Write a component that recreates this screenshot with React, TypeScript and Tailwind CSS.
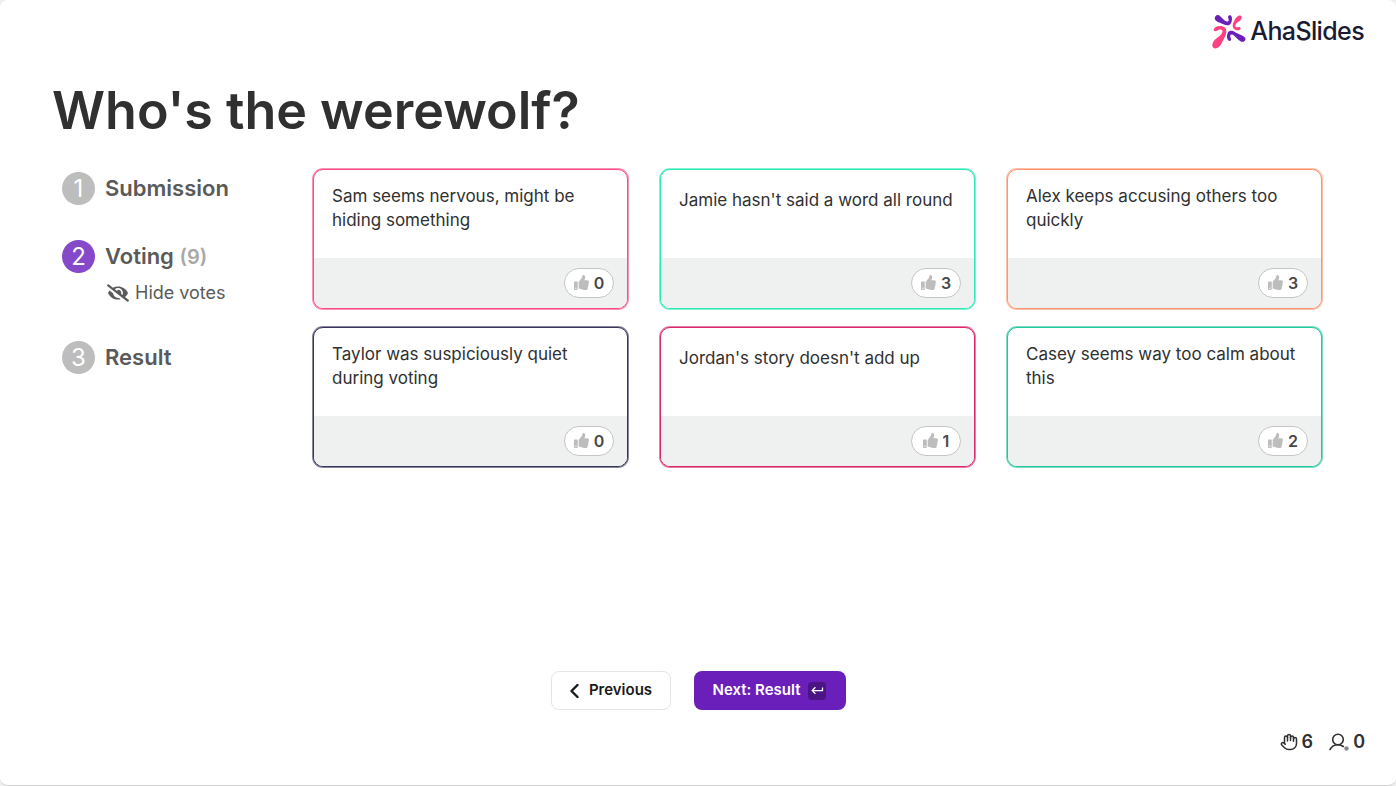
import { useState } from 'react';
import { Hand } from 'lucide-react';
import { FaEyeSlash, FaThumbsUp } from 'react-icons/fa';
import { MdKeyboardReturn } from 'react-icons/md';

type Idea = {
  text: string;
  votes: number;
  border: string;
};

const ideas: Idea[] = [
  {
    text: 'Sam seems nervous, might be hiding something',
    votes: 0,
    border: 'border-[#fc4a87] ring-[#fc4a87]/60',
  },
  {
    text: "Jamie hasn't said a word all round",
    votes: 3,
    border: 'border-[#2be8b3] ring-[#2be8b3]/60',
  },
  {
    text: 'Alex keeps accusing others too quickly',
    votes: 3,
    border: 'border-[#fd9570] ring-[#fd9570]/60',
  },
  {
    text: 'Taylor was suspiciously quiet during voting',
    votes: 0,
    border: 'border-[#38355a] ring-[#38355a]/60',
  },
  {
    text: "Jordan's story doesn't add up",
    votes: 1,
    border: 'border-[#d8266b] ring-[#d8266b]/60',
  },
  {
    text: 'Casey seems way too calm about this',
    votes: 2,
    border: 'border-[#22c79b] ring-[#22c79b]/60',
  },
];

function Logo() {
  return (
    <a href="#" className="flex items-center gap-1">
      <svg viewBox="0 0 34 36" className="h-9 w-[34px]" aria-hidden="true">
        <path
          d="M3 4.200C4 1.600 6.500 1.500 8.500 3.400C10.500 5.400 12.500 7.900 14.500 8.500C16.800 9.100 17.300 7.300 16.300 5.300C15.300 3 17.200 1.600 18.800 2.500C20.700 3.600 20.500 10.400 17.200 12C14.200 13.200 11 11.100 7.500 9.600C4.500 8.300 2 7 3 4.200Z"
          fill="#6a1eba"
        />
        <path
          d="M29 3C30.800 4.700 29.300 6.900 26.800 8.600C24.500 10 23 11.800 23.400 13.300C23.800 14.900 25.500 14 27 14C29 14 29.200 16.500 27.500 17C24.500 17.900 20.800 16.500 20.700 12.800C20.700 8.800 25.800 .6 29 3Z"
          fill="#ff4081"
        />
        <path
          d="M2.400 15.200C5.500 11.700 14 12.500 14.300 17.500C14.600 22.500 11.800 25.500 9.800 30C8.100 33.500 5.800 35.700 2.800 35.500C0 35.300 -.5 31.500 1.800 28C4.500 24.700 9.800 22.300 10.400 19C10.900 16.600 8 15.800 5.500 17.500C2.900 19.200 .4 17.500 2.400 15.200Z"
          fill="#ff4081"
        />
        <path
          d="M15.800 19.800C17 17.300 20.300 17.200 23.200 19.200C26.200 21.200 31.400 22.100 33.100 24.800C34.500 27.600 31.500 29.600 28.800 28.400C25.300 26.600 22.500 22 20 21.500C18 21.200 17.800 23.500 18.800 25.200C19.900 27.400 17.500 28.700 16.200 27.300C14.500 25.500 14.800 22 15.800 19.800Z"
          fill="#6a1eba"
        />
      </svg>
      <span className="text-[25px] leading-8 font-medium tracking-tight text-[#1a1a33]">
        AhaSlides
      </span>
    </a>
  );
}

function StepNumber({ value, active }: { value: number; active?: boolean }) {
  return (
    <span
      className={`flex size-[33px] items-center justify-center rounded-full text-2xl font-normal text-white ${
        active ? 'bg-[#8549c9]' : 'bg-[#bdbdbd]'
      }`}
    >
      {value}
    </span>
  );
}

function IdeaCard({ idea }: { idea: Idea }) {
  return (
    <li
      className={`flex flex-col overflow-hidden rounded-[10px] border bg-white ring-1 ${idea.border}`}
    >
      <div className="min-h-22 flex-1 px-[18px] pt-[14px]">
        <p className="flex min-h-8 items-center text-[17px] leading-6 text-[#303030]">
          {idea.text}
        </p>
      </div>
      <div className="flex h-[50px] items-center justify-end bg-[#eff1f0] px-[13px]">
        <button
          type="button"
          className="flex h-[30px] w-[50px] items-center justify-center gap-[5px] rounded-full border border-[#c4c4c4] bg-white text-base font-semibold text-[#484848]"
        >
          <FaThumbsUp className="mb-[2px] size-[15px] text-[#bdbdbd]" />
          {idea.votes}
        </button>
      </div>
    </li>
  );
}

export default function App() {
  const [votesHidden, setVotesHidden] = useState(false);

  return (
    <div className="min-h-screen bg-[#efefef] font-['Inter',sans-serif]">
      <div className="flex min-h-screen flex-col rounded-lg border-b border-[#cfcfcf] bg-white">
        <header className="flex justify-end px-8 pt-[13px]">
          <Logo />
        </header>

        <main className="flex flex-1 flex-col px-[52px] pt-[30px]">
          <h1 className="text-[52px] leading-16 font-semibold text-[#303030]">
            Who's the werewolf?
          </h1>

          <div className="flex pt-[26px] pr-[22px] pl-[10px]">
            <ol className="w-[251px] shrink-0 text-[22px] font-semibold text-[#5a5a5a]">
              <li className="flex items-center gap-[10px] pt-[3px]">
                <StepNumber value={1} />
                Submission
              </li>
              <li className="pt-[35px]">
                <div className="flex items-center gap-[10px]">
                  <StepNumber value={2} active />
                  <span>
                    Voting <span className="text-xl text-[#a8a8a8]">(9)</span>
                  </span>
                </div>
                <button
                  type="button"
                  onClick={() => setVotesHidden((value) => !value)}
                  className="ml-[45px] flex h-10 items-center gap-[6px] text-lg font-normal"
                >
                  <FaEyeSlash className="size-[22px]" />
                  {votesHidden ? 'Show votes' : 'Hide votes'}
                </button>
              </li>
              <li className="flex items-center gap-[10px] pt-7">
                <StepNumber value={3} />
                Result
              </li>
            </ol>

            <ul className="grid flex-1 grid-cols-3 gap-x-8 gap-y-[18px]">
              {ideas.map((idea) => (
                <IdeaCard key={idea.text} idea={idea} />
              ))}
            </ul>
          </div>
        </main>

        <nav className="flex justify-center gap-[23px]">
          <button
            type="button"
            className="flex h-[39px] w-[120px] items-center justify-center gap-2 rounded-lg border border-[#e4e4e4] bg-white text-[15px] font-semibold text-[#1a1a1a]"
          >
            <svg viewBox="0 0 12 14" className="h-[14px] w-3" aria-hidden="true">
              <path
                d="M8.500 1L2.500 7L8.500 13"
                fill="none"
                stroke="currentColor"
                strokeWidth="2.400"
                strokeLinecap="round"
                strokeLinejoin="round"
              />
            </svg>
            Previous
          </button>
          <button
            type="button"
            className="flex h-[39px] w-[152px] items-center justify-center gap-2 rounded-lg bg-[#6a1eba] text-[15px] font-semibold text-white"
          >
            Next: Result
            <span className="flex size-[18px] items-center justify-center rounded bg-[#4b1583]">
              <MdKeyboardReturn className="size-[15px]" />
            </span>
          </button>
        </nav>

        <footer className="flex items-center justify-end gap-4 px-[31px] pt-5 pb-[31px] text-lg leading-6 font-semibold text-[#303030]">
          <span className="flex items-center gap-1">
            <Hand className="size-[18px]" strokeWidth={2} />6
          </span>
          <span className="flex items-center gap-1">
            <svg viewBox="0 0 20 18" className="h-[18px] w-5" fill="none">
              <circle cx="9" cy="6.500" r="5.300" stroke="currentColor" strokeWidth="1.600" />
              <path
                d="M1 16.500C2.600 13.500 5.500 11.800 9 11.800C11 11.800 12.800 12.400 14.300 13.500"
                stroke="currentColor"
                strokeWidth="1.600"
                strokeLinecap="round"
              />
              <circle cx="17.500" cy="15.500" r="2.200" fill="#8a8a8a" />
            </svg>
            0
          </span>
        </footer>
      </div>
    </div>
  );
}
